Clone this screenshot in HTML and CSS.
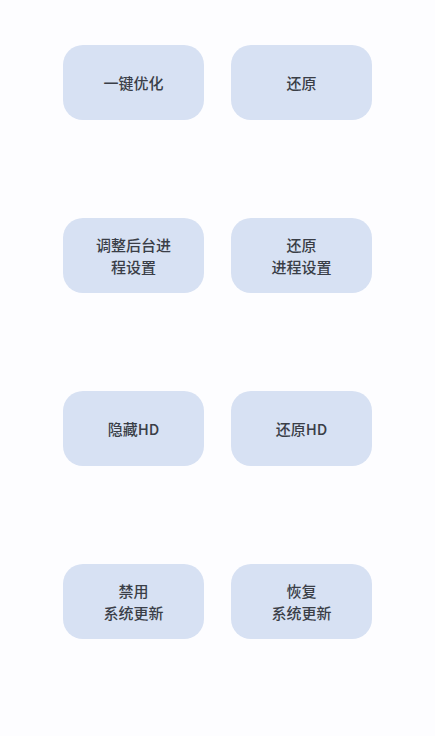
FILE: index.html
```html
<!DOCTYPE html>
<html>
  <head>
    <meta charset="utf-8">
    <title>优化工具</title>
    <link rel="stylesheet" href="styles.css">
  </head>
  <body>
    <div class="container">
      <!-- 一键优化 -->
      <button class="button">一键优化</button>
      <button class="button">还原</button>

      <!-- 后台进程 -->
      <button class="button">调整后台进<br>程设置</button>
      <button class="button">还原<br>进程设置</button>

      <!-- HD -->
      <button class="button">隐藏HD</button>
      <button class="button">还原HD</button>

      <!-- 系统更新 -->
      <button class="button">禁用<br>系统更新</button>
      <button class="button">恢复<br>系统更新</button>
    </div>
  </body>
</html>
```

FILE: styles.css
```css
body {
  margin: 0;
  background: #fdfdff;
  font-family: "Noto Sans CJK SC", "Noto Sans", sans-serif;
}
.container {
  display: grid;
  grid-template-columns: 141px 141px;
  grid-auto-rows: 75px;
  column-gap: 27px;
  row-gap: 98px;
  justify-content: center;
  padding-top: 45px;
}
.button {
  background: #d7e1f3;
  color: #3a3e47;
  border: none;
  border-radius: 20px;
  font-family: inherit;
  font-size: 15px;
  font-weight: 500;
  line-height: 22px;
  padding: 0 12px;
  cursor: pointer;
}
.button:hover {
  background: #ccd8ef;
}
```
